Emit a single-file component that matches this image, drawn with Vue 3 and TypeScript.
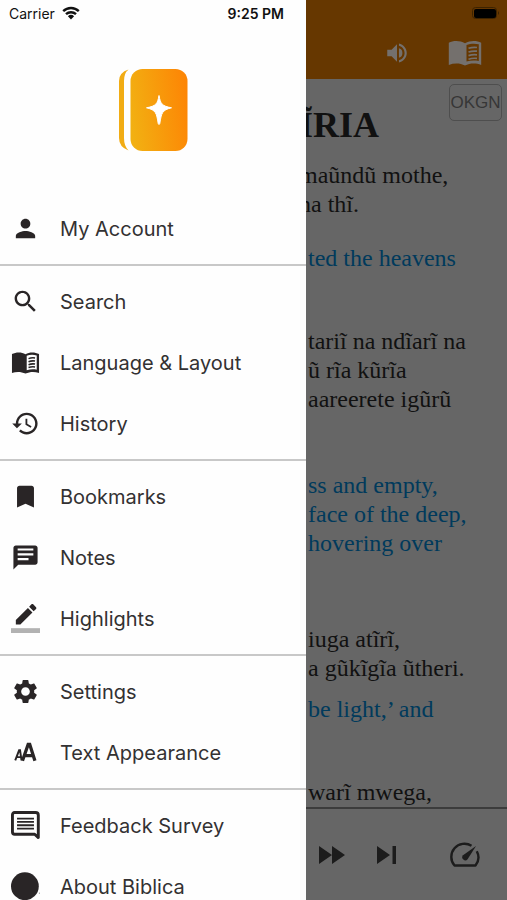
<script setup lang="ts">
interface MenuItem {
  label: string
  icon: string
}

interface Verse {
  kind: 'native' | 'translation'
  gap: 'none' | 'tight' | 'normal' | 'wide' | 'section'
  lines: string[]
}

const groups: MenuItem[][] = [
  [{ label: 'My Account', icon: 'person' }],
  [
    { label: 'Search', icon: 'search' },
    { label: 'Language & Layout', icon: 'book' },
    { label: 'History', icon: 'history' },
  ],
  [
    { label: 'Bookmarks', icon: 'bookmark' },
    { label: 'Notes', icon: 'notes' },
    { label: 'Highlights', icon: 'highlight' },
  ],
  [
    { label: 'Settings', icon: 'settings' },
    { label: 'Text Appearance', icon: 'text' },
  ],
  [
    { label: 'Feedback Survey', icon: 'feedback' },
    { label: 'About Biblica', icon: 'about' },
  ],
]

const paths: Record<string, string> = {
  person: 'M12 12c2.21 0 4-1.79 4-4s-1.79-4-4-4-4 1.79-4 4 1.79 4 4 4zm0 2c-2.67 0-8 1.34-8 4v2h16v-2c0-2.66-5.33-4-8-4z',
  search: 'M15.5 14h-.79l-.28-.27C15.41 12.59 16 11.11 16 9.5 16 5.91 13.09 3 9.5 3S3 5.91 3 9.5 5.91 16 9.5 16c1.61 0 3.09-.59 4.23-1.57l.27.28v.79l5 4.99L20.49 19l-4.99-5zm-6 0C7.01 14 5 11.99 5 9.5S7.01 5 9.5 5 14 7.01 14 9.5 11.99 14 9.5 14z',
  history: 'M13 3c-4.97 0-9 4.03-9 9H1l3.89 3.89.07.14L9 12H6c0-3.87 3.13-7 7-7s7 3.13 7 7-3.13 7-7 7c-1.93 0-3.68-.79-4.94-2.06l-1.42 1.42C8.27 19.99 10.51 21 13 21c4.97 0 9-4.03 9-9s-4.03-9-9-9zm-1 5v5l4.28 2.54.72-1.21-3.5-2.08V8H12z',
  bookmark: 'M17 3H7c-1.1 0-2 .9-2 2v16l7-3 7 3V5c0-1.1-.9-2-2-2z',
  notes: 'M20 2H4c-1.1 0-1.99.9-1.99 2L2 22l4-4h14c1.1 0 2-.9 2-2V4c0-1.1-.9-2-2-2zM5.500 4.500h13v1.800h-13zm0 4h13v1.800h-13zm0 4h9v1.800h-9z',
  settings: 'M19.14 12.94c.04-.3.06-.61.06-.94s-.02-.64-.07-.94l2.03-1.58c.18-.14.23-.41.12-.61l-1.92-3.32c-.12-.22-.37-.29-.59-.22l-2.39.96c-.5-.38-1.03-.7-1.62-.94L14.4 2.81c-.04-.24-.24-.41-.48-.41h-3.84c-.24 0-.43.17-.47.41L9.25 5.35c-.59.24-1.13.57-1.62.94l-2.39-.96c-.22-.08-.47 0-.59.22L2.74 8.87c-.12.21-.08.47.12.61l2.03 1.58c-.05.3-.09.63-.09.94s.02.64.07.94l-2.03 1.58c-.18.14-.23.41-.12.61l1.92 3.32c.12.22.37.29.59.22l2.39-.96c.5.38 1.03.7 1.62.94l.36 2.54c.05.24.24.41.48.41h3.84c.24 0 .44-.17.47-.41l.36-2.54c.59-.24 1.13-.56 1.62-.94l2.39.96c.22.08.47 0 .59-.22l1.92-3.32c.12-.22.07-.47-.12-.61l-2.01-1.58zM12 15.600c-1.980 0-3.600-1.620-3.600-3.600s1.620-3.600 3.600-3.600 3.600 1.620 3.600 3.600-1.620 3.600-3.600 3.600z',
}

const verses: Verse[] = [
  { kind: 'native', gap: 'none', lines: ['maũndũ mothe,', 'na thĩ.'] },
  { kind: 'translation', gap: 'normal', lines: ['ted the heavens', ''] },
  { kind: 'native', gap: 'normal', lines: ['tariĩ na ndĩarĩ na', 'ũ rĩa kũrĩa', 'aareerete igũrũ', ''] },
  { kind: 'translation', gap: 'wide', lines: ['ss and empty,', 'face of the deep,', 'hovering over', ''] },
  { kind: 'native', gap: 'section', lines: ['iuga atĩrĩ,', 'a gũkĩgĩa ũtheri.'] },
  { kind: 'translation', gap: 'tight', lines: ['be light,’ and', ''] },
  { kind: 'native', gap: 'normal', lines: ['warĩ mwega,'] },
]
</script>

<template>
  <div class="screen">
    <aside class="drawer">
      <div class="status">
        <span class="carrier">Carrier</span>
        <svg class="wifi" viewBox="0 0 18 14" aria-hidden="true">
          <path d="M1.200 5.200a11.200 11.200 0 0 1 15.600 0M4 8.200a7.200 7.200 0 0 1 10 0" fill="none" stroke="#111" stroke-width="2.400" />
          <path d="M5.900 10.200a4.500 4.500 0 0 1 6.200 0L9 13.600z" fill="#111" />
        </svg>
        <time class="clock">9:25 PM</time>
      </div>
      <div class="brand">
        <svg class="logo" viewBox="0 0 70 84" role="img" aria-label="Bible">
          <defs>
            <linearGradient id="cover" x1="0" y1="0.6" x2="1" y2="0.4">
              <stop offset="0" stop-color="#f2b012" />
              <stop offset="1" stop-color="#fd8605" />
            </linearGradient>
          </defs>
          <path d="M10.500 1.500Q1 4.500 1 13V70Q1 79 10.500 82.500Q6 78 6 70V13Q6 5 10.500 1.500z" fill="#f1ac14" />
          <rect x="12.500" y="1" width="57" height="82" rx="12" fill="url(#cover)" />
          <path d="M41 27.500C42.500 36 44 38 53.500 39.800C44 42 43.500 45 41.800 55.500Q41 57.500 40.200 55.500C38.500 45 38 42 28.500 39.800C38 38 39.500 36 41 27.500z" fill="#fff" stroke="#fff" stroke-width="1" stroke-linejoin="round" />
        </svg>
      </div>
      <nav aria-label="Main menu">
        <ul v-for="(group, g) in groups" :key="g" class="group">
          <li v-for="item in group" :key="item.label">
            <a class="item" href="#">
              <svg class="icon" viewBox="0 0 24 24" aria-hidden="true">
                <path v-if="paths[item.icon]" :d="paths[item.icon]" fill-rule="evenodd" />
                <g v-else-if="item.icon === 'book'">
                  <path d="M.8 5C4 3.300 8.500 3 12 5.100C15.500 3 20 3.300 23.200 5V20.600C19.500 19.500 15.500 19.500 12 21.200C8.500 19.500 4.500 19.500 .8 20.600zM13 6.500V18.500C15.500 17.500 18.500 17.300 21.300 17.900V6.200C18.500 5.200 15.500 5.300 13 6.500z" fill-rule="evenodd" />
                  <path d="M14.500 8.800q2.700-1 5.400-.5M14.500 11.300q2.700-1 5.400-.5M14.500 13.800q2.700-1 5.400-.5M14.500 16.200q2.700-1 5.400-.5" fill="none" stroke="currentColor" stroke-width="1.300" />
                </g>
                <g v-else-if="item.icon === 'highlight'">
                  <path d="M17.750 7L14 3.250l-10 10V17h3.750l10-10zM20.710 4.040c.390-.390.390-1.020 0-1.410L18.370.290c-.390-.390-1.020-.390-1.410 0L15 2.250 18.750 6l1.960-1.960z" />
                  <path d="M0 20h24v4H0z" fill="#b2b2b2" />
                </g>
                <g v-else-if="item.icon === 'text'" fill="none" stroke="currentColor">
                  <path d="M3.500 18.500L6.700 10.200H7.500L8.700 18.500M4.700 15.800H8.500" stroke-width="1.600" />
                  <path d="M9.500 18.800L14.200 5.300H15.500L19.800 18.800M11.300 14.500H18" stroke-width="2.700" />
                </g>
                <g v-else-if="item.icon === 'feedback'" fill="none" stroke="currentColor" stroke-linejoin="round">
                  <path d="M3 1.300H20.300Q22.600 1.300 22.600 3.500V22L19.600 19.200H3Q1.200 19.200 1.200 17.400V3.200Q1.200 1.300 3 1.300z" stroke-width="2.400" />
                  <path d="M5 6.300H19M5 9H19M5 11.800H19M5 14.600H19" stroke-width="1.500" />
                </g>
                <g v-else>
                  <circle cx="11.500" cy="11.800" r="11.500" />
                  <circle cx="23.500" cy="17.500" r=".5" fill="#999" />
                </g>
              </svg>
              <span>{{ item.label }}</span>
            </a>
          </li>
        </ul>
      </nav>
    </aside>

    <main class="reader">
      <header class="bar">
        <div class="power">
          <svg class="battery" viewBox="0 0 30 14" aria-hidden="true">
            <rect x="1.500" y="1.500" width="24" height="11" rx="3" fill="none" stroke="#3d2300" stroke-width="1" />
            <rect x="3" y="3" width="22" height="9" rx="2" fill="#000" />
            <path d="M27 5q2 2 0 4z" fill="#3d2300" />
          </svg>
        </div>
        <div class="tools">
          <button type="button" aria-label="Audio">
            <svg class="speaker" viewBox="0 0 24 24">
              <path d="M3 9v6h4l5 5V4L7 9H3z" />
              <path d="M13.800 7.600C16.300 8.300 17 10 17 12S16.300 15.700 13.800 16.400z M13.800 3.200v2.100c3.200.9 5.200 3.500 5.200 6.700s-2 5.800-5.200 6.700v2.100c4.200-1 7.200-4.500 7.200-8.800s-3-7.800-7.200-8.800z" />
            </svg>
          </button>
          <button type="button" aria-label="Layout">
            <svg class="open-book" viewBox="0 0 34 26">
              <path d="M.8 2.800C5 .3 12 .3 17 3.200C22 .3 29 .3 33.200 2.800V25C28 23 22 23 17 25.600C12 23 6 23 .8 25zM18.500 5V21.600C22 20.400 26.500 20.200 30.800 21V4.200C26.500 3.200 22 3.600 18.500 5z" fill-rule="evenodd" />
              <path d="M20.500 8.300q4-1.300 8.500-.8M20.500 12q4-1.300 8.500-.8M20.500 15.600q4-1.300 8.500-.8M20.500 19.200q4-1.300 8.500-.8" fill="none" stroke="currentColor" stroke-width="1.700" />
            </svg>
          </button>
        </div>
      </header>
      <article class="chapter">
        <button type="button" class="version">OKGN</button>
        <h1>ĨRIA</h1>
        <p v-for="(verse, v) in verses" :key="v" :class="['verse', verse.kind, verse.gap]">
          <span v-for="(line, l) in verse.lines" :key="l" class="line">{{ line }}</span>
        </p>
      </article>
      <footer class="player">
        <button type="button" aria-label="Fast forward">
          <svg class="forward" viewBox="0 0 26 18"><path d="M0 0l13 9L0 18zM13 0l13 9-13 9z" /></svg>
        </button>
        <button type="button" aria-label="Next chapter">
          <svg class="next" viewBox="0 0 19 18"><path d="M0 0l13 9L0 18zM15.500 0H19v18h-3.500z" /></svg>
        </button>
        <button type="button" class="speed" aria-label="Playback speed">
          <svg class="gauge" viewBox="0 0 30 26">
            <path d="M21.500 3.700A13.200 13.200 0 0 0 4.500 23.500H25.500A13.200 13.200 0 0 0 26.800 9.200" fill="none" stroke="currentColor" stroke-width="2.400" stroke-linejoin="round" />
            <path d="M26 4L17.600 17.200A3 3 0 1 1 13 13.300z" />
          </svg>
        </button>
      </footer>
    </main>
  </div>
</template>

<style>
body {
  margin: 0;
}
</style>

<style scoped>
.screen {
  display: grid;
  grid-template-columns: 306px minmax(0, 1fr);
  height: 100vh;
  overflow: hidden;
}

button {
  display: flex;
  padding: 0;
  border: 0;
  background: none;
  color: inherit;
}

svg {
  display: block;
  fill: currentColor;
}

.drawer {
  overflow: hidden;
  background: #fefefe;
  color: #292526;
  font-family: Inter, "Liberation Sans", sans-serif;
}

.status {
  display: flex;
  align-items: center;
  height: 26px;
  padding: 0 22px 0 9px;
  color: #111;
  font-size: 14px;
}

.wifi {
  width: 18px;
  height: 14px;
  margin-left: 7px;
}

.clock {
  margin-left: auto;
  font-weight: 600;
}

.brand {
  display: flex;
  justify-content: center;
  align-items: center;
  height: 167px;
}

.logo {
  width: 70px;
  height: 84px;
}

.group {
  margin: 0;
  padding: 5px 0;
  list-style: none;
}

.group + .group {
  border-top: 2px solid #c8c8c8;
}

.item {
  display: flex;
  align-items: center;
  gap: 20px;
  height: 61px;
  padding-left: 11px;
  color: inherit;
  font-size: 20px;
  text-decoration: none;
  white-space: nowrap;
}

.icon {
  flex: none;
  width: 29px;
  height: 29px;
}

.item span {
  color: #333132;
}

.reader {
  display: flex;
  flex-direction: column;
  min-height: 0;
  overflow: hidden;
  background: #666;
  color: #111;
}

.bar {
  flex: none;
  height: 79px;
  background: #663700;
  color: #74706d;
}

.power {
  display: flex;
  justify-content: flex-end;
  padding: 6px 6px 0 0;
}

.battery {
  width: 30px;
  height: 14px;
}

.tools {
  display: flex;
  justify-content: flex-end;
  align-items: center;
  gap: 38px;
  height: 66px;
  padding-right: 25px;
}

.speaker {
  width: 26px;
  height: 26px;
}

.open-book {
  width: 34px;
  height: 26px;
}

.chapter {
  position: relative;
  flex: 1;
  min-height: 0;
  padding-left: 2px;
  overflow: hidden;
  font-family: "Liberation Serif", serif;
  font-size: 24px;
  line-height: 29px;
}

.version {
  position: absolute;
  top: 5px;
  right: 5px;
  justify-content: center;
  align-items: center;
  width: 53px;
  height: 37px;
  border: 1px solid #4e4e4e;
  border-radius: 5px;
  color: #363636;
  font-family: "Liberation Sans", sans-serif;
  font-size: 17px;
}

h1 {
  margin: 0;
  padding: 26px 0 15px;
  font-size: 36px;
  line-height: 41px;
}

h1,
.none {
  margin-left: -9px;
}

.verse {
  margin-top: 0;
  margin-bottom: 0;
}

.line {
  display: block;
  height: 29px;
  white-space: nowrap;
}

.translation {
  color: #003a5c;
}

.tight {
  margin-top: 12px;
}

.normal {
  margin-top: 25px;
}

.wide {
  margin-top: 28px;
}

.section {
  margin-top: 38px;
}

.player {
  display: flex;
  flex: none;
  align-items: center;
  gap: 32px;
  height: 91px;
  padding: 0 27px 0 13px;
  border-top: 2px solid #3c3c3c;
  color: #1c1c1c;
}

.forward {
  width: 26px;
  height: 18px;
}

.next {
  width: 19px;
  height: 18px;
}

.speed {
  margin-left: auto;
}

.gauge {
  width: 30px;
  height: 26px;
}
</style>
